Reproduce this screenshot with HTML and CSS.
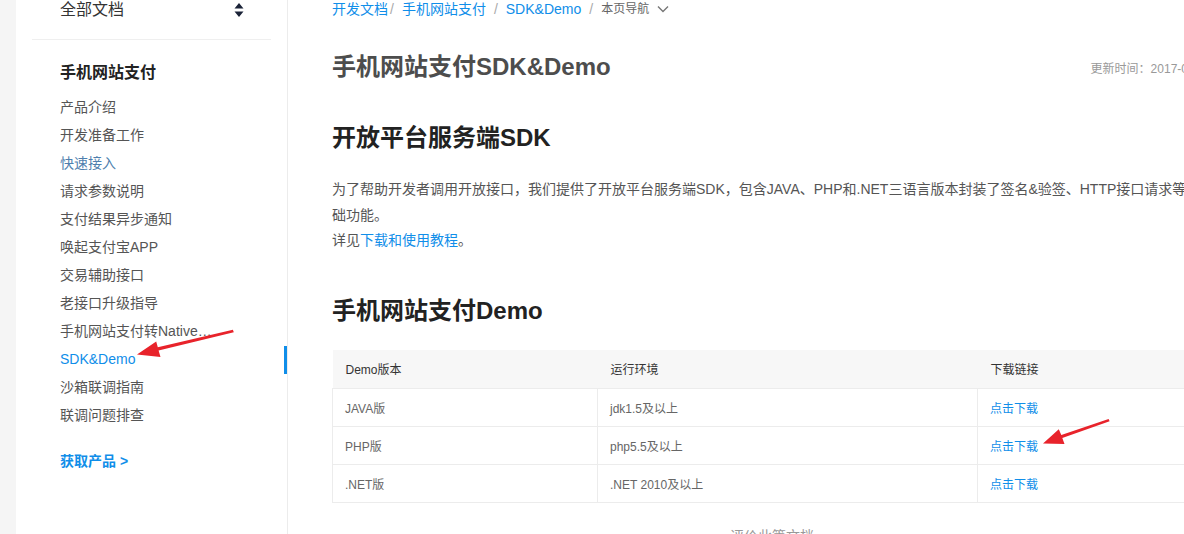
FILE: index.html
```html
<!DOCTYPE html>
<html lang="zh-CN">
<head>
<meta charset="utf-8">
<title>手机网站支付SDK&amp;Demo</title>
<link rel="stylesheet" href="styles.css">
</head>
<body>
<div class="page">
  <div class="gutter"></div>
  <aside class="sidebar">
    <div class="side-head">
      <span class="side-title">全部文档</span>
      <svg class="sort-icon" width="10" height="16" viewBox="0 0 10 16"><path d="M5 1 L9.5 6.5 H0.5 Z M5 15 L9.5 9.5 H0.5 Z" fill="#1b2338"/></svg>
    </div>
    <div class="side-group">手机网站支付</div>
    <ul class="side-menu">
      <li>产品介绍</li>
      <li>开发准备工作</li>
      <li class="visited">快速接入</li>
      <li>请求参数说明</li>
      <li>支付结果异步通知</li>
      <li>唤起支付宝APP</li>
      <li>交易辅助接口</li>
      <li>老接口升级指导</li>
      <li>手机网站支付转Native…</li>
      <li class="active">SDK&amp;Demo</li>
      <li>沙箱联调指南</li>
      <li>联调问题排查</li>
    </ul>
    <div class="get-product">获取产品 &gt;</div>
  </aside>
  <main class="main">
    <nav class="crumbs">
      <a class="crumb">开发文档</a><span class="sep sep-tight">/</span>
      <a class="crumb">手机网站支付</a><span class="sep">/</span>
      <a class="crumb">SDK&amp;Demo</a><span class="sep">/</span>
      <span class="crumb-page">本页导航</span>
      <svg class="chev" width="12" height="8" viewBox="0 0 12 8"><path d="M1 1.5 L6 6.5 L11 1.5" fill="none" stroke="#777" stroke-width="1.4"/></svg>
    </nav>
    <div class="title-row">
      <h1 class="page-title">手机网站支付SDK&amp;Demo</h1>
      <span class="updated">更新时间：2017-09-05</span>
    </div>
    <h2 class="sec-title sec-first">开放平台服务端SDK</h2>
    <p class="para">为了帮助开发者调用开放接口，我们提供了开放平台服务端SDK，包含JAVA、PHP和.NET三语言版本封装了签名&amp;验签、HTTP接口请求等基础功能。<br>详见<a class="link">下载和使用教程</a>。</p>
    <h2 class="sec-title sec-second">手机网站支付Demo</h2>
    <table class="demo-table">
      <thead>
        <tr><th class="c1">Demo版本</th><th class="c2">运行环境</th><th class="c3">下载链接</th></tr>
      </thead>
      <tbody>
        <tr><td>JAVA版</td><td>jdk1.5及以上</td><td><a class="link">点击下载</a></td></tr>
        <tr><td>PHP版</td><td>php5.5及以上</td><td><a class="link">点击下载</a></td></tr>
        <tr><td>.NET版</td><td>.NET 2010及以上</td><td><a class="link">点击下载</a></td></tr>
      </tbody>
    </table>
    <div class="feedback">评价此篇文档</div>
  </main>
</div>
<svg class="annot" width="1184" height="534" viewBox="0 0 1184 534">
  <polygon fill="#e8232b" points="137,354.5 160.5,357 158.6,350.6 233.8,332.2 232.9,329.8 157.8,347.2 156.2,341.5"/>
  <polygon fill="#e8232b" points="1043,443.5 1064.5,444 1062.3,438 1109.6,421.3 1108.6,418.9 1061.3,434.9 1058.8,429.2"/>
</svg>
</body>
</html>
```

FILE: styles.css
```css
html, body {
  margin: 0;
  padding: 0;
  background: #fff;
  overflow: hidden;
}
body {
  width: 1184px;
  height: 534px;
  position: relative;
  font-family: "Liberation Sans", "Noto Sans CJK SC", sans-serif;
  color: #555;
}
.page {
  display: flex;
  align-items: stretch;
  height: 534px;
}
.gutter {
  width: 16px;
  flex: none;
  background: #f5f5f5;
}
.sidebar {
  width: 271px;
  flex: none;
  border-right: 1px solid #ececec;
  background: #fff;
}
.side-head {
  margin: 0 16px;
  padding: 0 27px 0 28px;
  height: 39px;
  border-bottom: 1px solid #efefef;
  display: flex;
  justify-content: space-between;
  align-items: flex-start;
}
.side-title {
  font-size: 16px;
  line-height: 20px;
  color: #333;
}
.sort-icon {
  margin-top: 2px;
}
.side-group {
  margin-top: 22px;
  padding-left: 44px;
  font-size: 16px;
  font-weight: bold;
  line-height: 22px;
  color: #222;
}
.side-menu {
  list-style: none;
  margin: 9px 0 0;
  padding: 0;
}
.side-menu li {
  position: relative;
  padding-left: 44px;
  font-size: 14px;
  line-height: 28px;
  color: #555;
  white-space: nowrap;
}
.side-menu li.visited {
  color: #4f7fae;
}
.side-menu li.active {
  color: #108ee9;
}
.side-menu li.active::after {
  content: "";
  position: absolute;
  right: 0;
  top: 1px;
  width: 3px;
  height: 28px;
  background: #108ee9;
}
.get-product {
  margin-top: 18px;
  padding-left: 44px;
  font-size: 14px;
  font-weight: bold;
  line-height: 28px;
  color: #108ee9;
}
.main {
  flex: none;
  width: 880px;
  padding-left: 44px;
}
.crumbs {
  display: flex;
  align-items: center;
  height: 18px;
  font-size: 14px;
  line-height: 18px;
}
.crumb {
  color: #108ee9;
}
.sep {
  color: #aaa;
  margin: 0 8px;
}
.sep-tight {
  margin-left: 2px;
}
.crumb-page {
  font-size: 12px;
  color: #666;
}
.chev {
  margin-left: 8px;
}
.title-row {
  margin-top: 36px;
  display: flex;
  justify-content: space-between;
  align-items: center;
  height: 26px;
}
.page-title {
  margin: 0;
  font-size: 24px;
  line-height: 26px;
  font-weight: bold;
  color: #4d4d4d;
}
.updated {
  font-size: 12px;
  color: #999;
}
.sec-title {
  margin: 0;
  font-size: 24px;
  line-height: 32px;
  font-weight: bold;
  color: #222;
}
.sec-first {
  margin-top: 42px;
}
.para {
  margin: 23px 0 0;
  font-size: 14px;
  line-height: 25.5px;
  color: #555;
}
.link {
  color: #108ee9;
}
.sec-second {
  margin-top: 41px;
}
.demo-table {
  margin-top: 23px;
  width: 100%;
  border-collapse: collapse;
  font-size: 12px;
}
.demo-table th {
  height: 38px;
  padding: 0 13px;
  text-align: left;
  font-weight: normal;
  color: #333;
  background: #f7f7f7;
}
.demo-table td {
  height: 37px;
  padding: 0 12px;
  color: #666;
  border: 1px solid #ececec;
}
.demo-table .c1 { width: 239px; }
.demo-table .c2 { width: 354px; }
.feedback {
  margin-top: 22px;
  text-align: center;
  font-size: 14px;
  color: #999;
}
.annot {
  position: absolute;
  left: 0;
  top: 0;
  pointer-events: none;
}
```
